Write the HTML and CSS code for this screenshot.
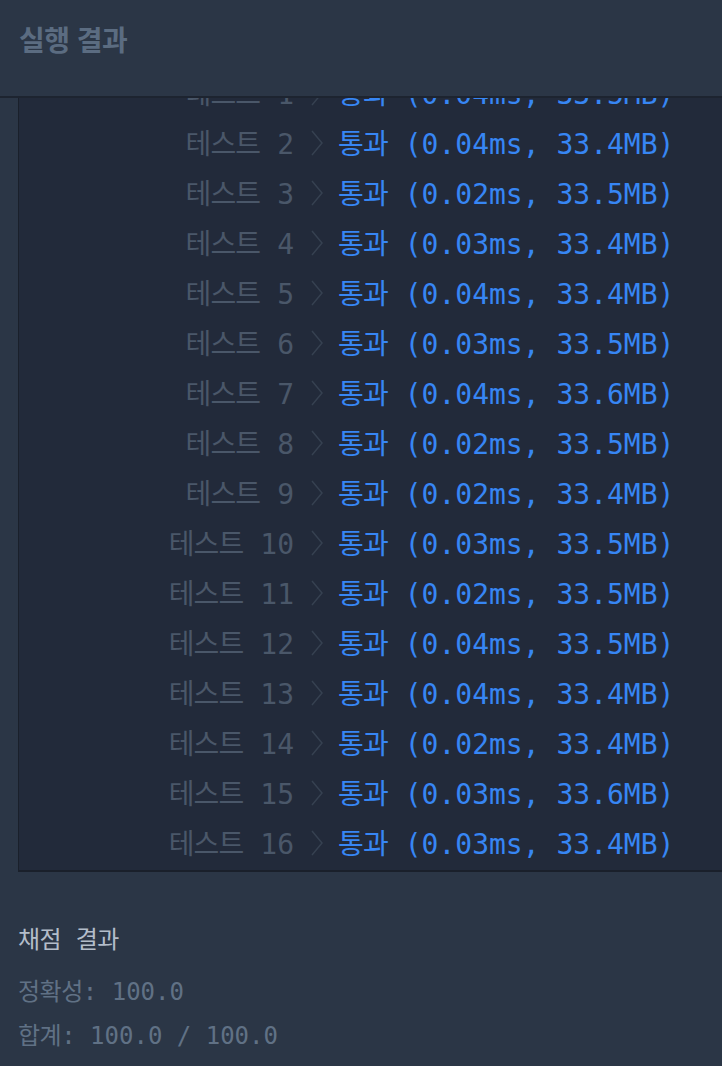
FILE: index.html
```html
<!DOCTYPE html>
<html lang="ko">
<head>
    <meta charset="UTF-8">
    <meta name="viewport" content="width=device-width, initial-scale=1.0">
    <title>실행 결과</title>
    <link rel="stylesheet" href="styles.css">
</head>
<body>
    <div class="header">
        <h2 class="title">실행 결과</h2>
    </div>

    <div class="console">
        <div class="results">
            <div class="row"><div class="name"><span class="ko">테스트</span> 1</div><svg class="arrow" viewBox="0 0 14 26"><polyline points="2,1 12,13 2,25"/></svg><div class="pass"><span class="ko">통과</span> (0.04ms, 33.5MB)</div></div>
            <div class="row"><div class="name"><span class="ko">테스트</span> 2</div><svg class="arrow" viewBox="0 0 14 26"><polyline points="2,1 12,13 2,25"/></svg><div class="pass"><span class="ko">통과</span> (0.04ms, 33.4MB)</div></div>
            <div class="row"><div class="name"><span class="ko">테스트</span> 3</div><svg class="arrow" viewBox="0 0 14 26"><polyline points="2,1 12,13 2,25"/></svg><div class="pass"><span class="ko">통과</span> (0.02ms, 33.5MB)</div></div>
            <div class="row"><div class="name"><span class="ko">테스트</span> 4</div><svg class="arrow" viewBox="0 0 14 26"><polyline points="2,1 12,13 2,25"/></svg><div class="pass"><span class="ko">통과</span> (0.03ms, 33.4MB)</div></div>
            <div class="row"><div class="name"><span class="ko">테스트</span> 5</div><svg class="arrow" viewBox="0 0 14 26"><polyline points="2,1 12,13 2,25"/></svg><div class="pass"><span class="ko">통과</span> (0.04ms, 33.4MB)</div></div>
            <div class="row"><div class="name"><span class="ko">테스트</span> 6</div><svg class="arrow" viewBox="0 0 14 26"><polyline points="2,1 12,13 2,25"/></svg><div class="pass"><span class="ko">통과</span> (0.03ms, 33.5MB)</div></div>
            <div class="row"><div class="name"><span class="ko">테스트</span> 7</div><svg class="arrow" viewBox="0 0 14 26"><polyline points="2,1 12,13 2,25"/></svg><div class="pass"><span class="ko">통과</span> (0.04ms, 33.6MB)</div></div>
            <div class="row"><div class="name"><span class="ko">테스트</span> 8</div><svg class="arrow" viewBox="0 0 14 26"><polyline points="2,1 12,13 2,25"/></svg><div class="pass"><span class="ko">통과</span> (0.02ms, 33.5MB)</div></div>
            <div class="row"><div class="name"><span class="ko">테스트</span> 9</div><svg class="arrow" viewBox="0 0 14 26"><polyline points="2,1 12,13 2,25"/></svg><div class="pass"><span class="ko">통과</span> (0.02ms, 33.4MB)</div></div>
            <div class="row"><div class="name"><span class="ko">테스트</span> 10</div><svg class="arrow" viewBox="0 0 14 26"><polyline points="2,1 12,13 2,25"/></svg><div class="pass"><span class="ko">통과</span> (0.03ms, 33.5MB)</div></div>
            <div class="row"><div class="name"><span class="ko">테스트</span> 11</div><svg class="arrow" viewBox="0 0 14 26"><polyline points="2,1 12,13 2,25"/></svg><div class="pass"><span class="ko">통과</span> (0.02ms, 33.5MB)</div></div>
            <div class="row"><div class="name"><span class="ko">테스트</span> 12</div><svg class="arrow" viewBox="0 0 14 26"><polyline points="2,1 12,13 2,25"/></svg><div class="pass"><span class="ko">통과</span> (0.04ms, 33.5MB)</div></div>
            <div class="row"><div class="name"><span class="ko">테스트</span> 13</div><svg class="arrow" viewBox="0 0 14 26"><polyline points="2,1 12,13 2,25"/></svg><div class="pass"><span class="ko">통과</span> (0.04ms, 33.4MB)</div></div>
            <div class="row"><div class="name"><span class="ko">테스트</span> 14</div><svg class="arrow" viewBox="0 0 14 26"><polyline points="2,1 12,13 2,25"/></svg><div class="pass"><span class="ko">통과</span> (0.02ms, 33.4MB)</div></div>
            <div class="row"><div class="name"><span class="ko">테스트</span> 15</div><svg class="arrow" viewBox="0 0 14 26"><polyline points="2,1 12,13 2,25"/></svg><div class="pass"><span class="ko">통과</span> (0.03ms, 33.6MB)</div></div>
            <div class="row"><div class="name"><span class="ko">테스트</span> 16</div><svg class="arrow" viewBox="0 0 14 26"><polyline points="2,1 12,13 2,25"/></svg><div class="pass"><span class="ko">통과</span> (0.03ms, 33.4MB)</div></div>
        </div>
    </div>

    <div class="summary">
        <h4 class="summary-title"><span class="ko">채점</span> <span class="ko">결과</span></h4>
        <div class="line"><span class="ko">정확성</span>: 100.0</div>
        <div class="line"><span class="ko">합계</span>: 100.0 / 100.0</div>
    </div>
</body>
</html>
```

FILE: styles.css
```css
body {
    margin: 0;
    background-color: #2b3646;
    font-family: "DejaVu Sans Mono", "Noto Sans CJK KR", monospace;
    overflow: hidden;
}
.header {
    height: 96px;
    padding-left: 19px;
    border-bottom: 2px solid #1d2430;
}
.title {
    margin: 0;
    padding-top: 19px;
    font-family: "Noto Sans CJK KR", sans-serif;
    font-size: 28px;
    font-weight: 700;
    line-height: 40px;
    letter-spacing: -0.5px;
    color: #5b6c81;
}
.console {
    margin-left: 18px;
    height: 772px;
    border-left: 1px solid #1a202b;
    border-bottom: 2px solid #1a202b;
    background-color: #222a3a;
    overflow: hidden;
}
.results {
    margin-top: -30px;
}
.row {
    display: flex;
    align-items: center;
    height: 50px;
    font-size: 28px;
    line-height: 32px;
    white-space: pre;
}
.ko {
    font-family: "Noto Sans CJK KR", sans-serif;
    letter-spacing: -0.03em;
}
.name {
    width: 275px;
    text-align: right;
    color: #4a5769;
}
.arrow {
    width: 14px;
    height: 26px;
    margin: 0 14px 0 16px;
    fill: none;
    stroke: #364151;
    stroke-width: 1.5;
}
.pass {
    color: #3786f4;
}
.summary {
    padding: 43px 0 0 18px;
    font-size: 24px;
}
.summary-title {
    margin: 0 0 6px;
    font-size: 24px;
    font-weight: 400;
    line-height: 45px;
    color: #b3bdca;
}
.summary .ko {
    letter-spacing: -0.02em;
}
.line {
    line-height: 41px;
    color: #607185;
}
```
